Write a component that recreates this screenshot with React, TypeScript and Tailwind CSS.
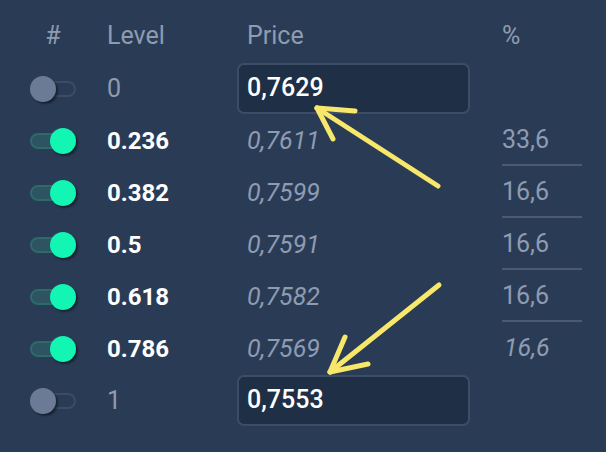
import React from "react";

type Row = { on: boolean; level: string; price: string; input?: boolean; pct?: string; line?: boolean; pctItalic?: boolean };

const rows: Row[] = [
  { on: false, level: "0", price: "0,7629", input: true },
  { on: true, level: "0.236", price: "0,7611", pct: "33,6", line: true },
  { on: true, level: "0.382", price: "0,7599", pct: "16,6", line: true },
  { on: true, level: "0.5", price: "0,7591", pct: "16,6", line: true },
  { on: true, level: "0.618", price: "0,7582", pct: "16,6", line: true },
  { on: true, level: "0.786", price: "0,7569", pct: "16,6", pctItalic: true },
  { on: false, level: "1", price: "0,7553", input: true },
];

function Toggle({ on }: { on: boolean }) {
  return (
    <div className="relative w-[46px] h-[26px] flex items-center">
      <div
        className={
          "absolute left-0 right-0 h-[16px] rounded-full border-2 " +
          (on ? "bg-[#2e5361] border-[#2c6b6a]" : "bg-transparent border-[#3b4c65]")
        }
      />
      <div
        className={
          "absolute top-0 w-[26px] h-[26px] rounded-full shadow-[2px_2px_2px_rgba(10,18,30,0.6)] " +
          (on ? "left-[20px] bg-[#12f5b3]" : "left-0 bg-[#6c7b95]")
        }
      />
    </div>
  );
}

export default function App() {
  return (
    <div
      className="relative w-[606px] h-[452px] bg-[#2a3c55] overflow-hidden"
      style={{ fontFamily: "Roboto, 'Liberation Sans', sans-serif" }}
    >
      <div className="pt-[8px] pl-[30px]">
        <div className="grid grid-cols-[46px_161px_233px_112px] items-center">
          {/* header */}
          <div className="h-[55px] flex items-center justify-center text-[25px] text-[#8e9bb1]">#</div>
          <div className="h-[55px] flex items-center pl-[31px] text-[25px] text-[#8e9bb1]">Level</div>
          <div className="h-[55px] flex items-center pl-[10px] text-[25px] text-[#8e9bb1]">Price</div>
          <div className="h-[55px] flex items-center pl-[32px] text-[25px] text-[#8e9bb1]">%</div>
          {rows.map((r, i) => (
            <React.Fragment key={i}>
              <div className="h-[52px] flex items-center">
                <Toggle on={r.on} />
              </div>
              <div
                className={
                  "h-[52px] flex items-center pl-[31px] " +
                  (r.on ? "text-[24px] font-bold text-white" : "text-[25px] text-[#8e9bb1]")
                }
              >
                {r.level}
              </div>
              <div className="h-[52px] flex items-center">
                {r.input ? (
                  <div className="w-[233px] h-[51px] -mt-[2px] rounded-[7px] border-2 border-[#3c4d66] bg-[#1f2f45] flex items-center pl-[8px] text-[25px] font-medium text-white">
                    {r.price}
                  </div>
                ) : (
                  <div className="pl-[10px] text-[25px] italic text-[#8e9bb1]">{r.price}</div>
                )}
              </div>
              <div className="h-[52px] pl-[32px] flex flex-col justify-end">
                <div className="flex-1 flex items-center text-[25px] text-[#8e9bb1]">
                  <span className={r.pctItalic ? "italic pl-[2px]" : ""}>{r.pct ?? ""}</span>
                </div>
                <div className={"h-[2px] w-[80px] mb-[1px] " + (r.line ? "bg-[#4a5a72]" : "bg-transparent")} />
              </div>
            </React.Fragment>
          ))}
        </div>
      </div>
      <svg className="absolute inset-0 pointer-events-none" width="606" height="452" viewBox="0 0 606 452">
        <g stroke="#f7e76a" strokeWidth="5" strokeLinecap="round" strokeLinejoin="round" fill="none">
          <path d="M438 186 L317 108" />
          <path d="M317 108 L355 111" />
          <path d="M317 108 L333 139" />
          <path d="M439 285 L330 372" />
          <path d="M330 372 L345 337" />
          <path d="M330 372 L368 364" />
        </g>
      </svg>
    </div>
  );
}
